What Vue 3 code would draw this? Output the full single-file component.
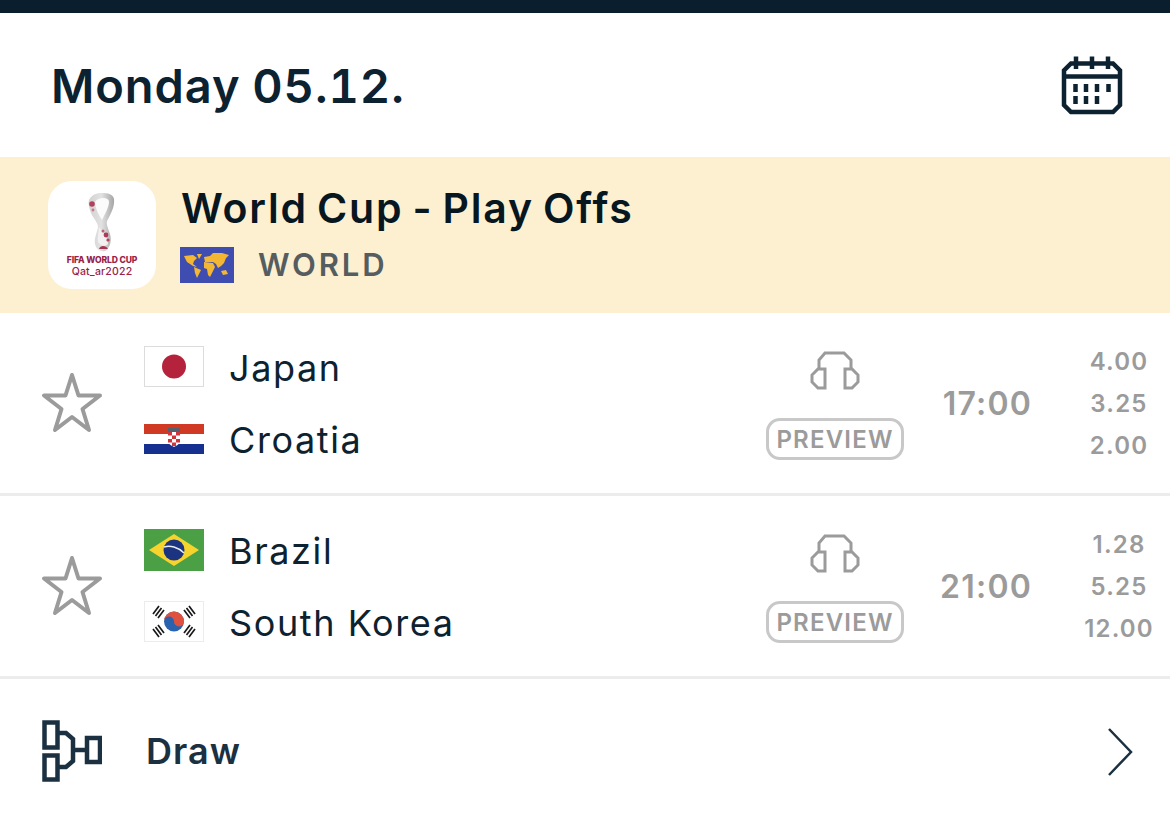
<script setup>
const matches = [
  { home: 'Japan', away: 'Croatia', homeFlag: 'jp', awayFlag: 'hr', time: '17:00', odds: ['4.00', '3.25', '2.00'] },
  { home: 'Brazil', away: 'South Korea', homeFlag: 'br', awayFlag: 'kr', time: '21:00', odds: ['1.28', '5.25', '12.00'] }
]
</script>

<template>
  <div class="screen">
    <div class="topbar"></div>
    <header class="header">
      <h1 class="day">Monday 05.12.</h1>
      <svg class="cal" width="62" height="62" viewBox="0 0 62 62" fill="none" stroke="#0d2230" stroke-width="4.500">
        <path d="M10 8.500H52L59 15.500V50L52 57H10L3 50V15.500Z" />
        <path d="M3 21.500H59" />
        <path d="M15 1.500V14M31 1.500V14M47 1.500V14" />
        <path d="M14.500 29V37M25 29V37M36 29V37M47.500 29V37M14.500 41V49M25 41V49M36 41V49" />
      </svg>
    </header>

    <section class="league">
      <div class="logo">
        <svg class="trophy" width="28" height="60" viewBox="0 0 28 60" fill="none">
          <defs>
            <linearGradient id="silver" x1="0" y1="0" x2="1" y2="0">
              <stop offset="0" stop-color="#d2d2d2" />
              <stop offset=".5" stop-color="#e2e2e2" />
              <stop offset="1" stop-color="#a5a5a5" />
            </linearGradient>
          </defs>
          <path d="M1 7C4 1 9 0 14 0C20 0 25 1 26 6C27 14 22 22 19 28C18 31 20 35 22 41C24 48 22 55 17 58C12 59 8 56 7 51C6 45 9 40 10 34C10 30 6 26 3 20C1 15 0 10 1 7Z" fill="url(#silver)" />
          <path d="M7 9C9 6 12 5 15 5C18 5 21 6 21 9C21 14 17 21 14 27C11 22 7 15 7 9Z" fill="#fbfbfb" />
          <path d="M11 34C14 38 20 44 20 51C17 54 13 53 10 49C9 44 11 39 11 34Z" fill="#f1f1f1" />
          <circle cx="4" cy="11" r="2.800" fill="#b5405c" />
          <circle cx="5" cy="17" r="1.400" fill="#c77a8c" />
          <circle cx="15" cy="38" r="1.500" fill="#c06077" />
          <circle cx="18" cy="42" r="2.400" fill="#ad3a56" />
          <circle cx="20" cy="47" r="1.600" fill="#b5405c" />
          <path d="M11 56C12 52 18 52 20 56Z" fill="#a83450" />
        </svg>
        <div class="fifa">FIFA WORLD CUP</div>
        <div class="qatar">Qat_ar2022</div>
      </div>
      <div class="league-info">
        <div class="league-name">World Cup - Play Offs</div>
        <div class="league-sub">
          <svg class="world" width="54" height="36" viewBox="0 0 54 36">
            <rect width="54" height="36" fill="#3f4db0" />
            <path d="M4 9L13 8L17 11L14 14L13 17L17 20L13 19L7 15Z" fill="#f4b733" />
            <path d="M17 7L22 7L19 12Z" fill="#f4b733" />
            <path d="M14 20L21 23L17 31L15 26Z" fill="#f4b733" />
            <path d="M24 10L30 9L33 6L42 6L49 8L46 11L44 16L41 19L38 21L36 17L33 15L25 15Z" fill="#f4b733" />
            <path d="M24 15L33 16L35 20L30 30L28 28L27 22L24 21Z" fill="#f4b733" />
            <path d="M41 24L46 23L48 27L43 28Z" fill="#f4b733" />
          </svg>
          <span class="region">WORLD</span>
        </div>
      </div>
    </section>

    <article v-for="m in matches" :key="m.home" class="match">
      <svg class="star" width="62" height="62" viewBox="0 0 62 62" fill="none" stroke="#9b9b9b" stroke-width="4" stroke-linejoin="round">
        <path d="M31 3L37.500 23.500H59L41.500 37L48 58L31 45L14 58L20.500 37L3 23.500H24.500Z" />
      </svg>
      <div class="teams">
        <div v-for="t in [{ n: m.home, f: m.homeFlag }, { n: m.away, f: m.awayFlag }]" :key="t.n" class="team">
          <svg class="flag" width="60" height="42" viewBox="0 0 60 42">
            <template v-if="t.f === 'jp'">
              <rect x=".5" y=".5" width="59" height="40" fill="#fff" stroke="#dcdcdc" />
              <circle cx="30" cy="20.500" r="12" fill="#b5223c" />
            </template>
            <template v-else-if="t.f === 'hr'">
              <rect y="6" width="60" height="10" fill="#d03a25" />
              <rect y="16" width="60" height="10" fill="#fff" />
              <rect y="26" width="60" height="10" fill="#15308f" />
              <rect x="24" y="10" width="12" height="4" fill="#56606a" />
              <path d="M24 14H36V23C36 26 32 28 30 29C28 28 24 26 24 23Z" fill="#fff" />
              <path d="M24 14H28V17.500H24ZM32 14H36V17.500H32ZM28 17.500H32V21H28ZM24 21H28V24.500H24ZM32 21H36V24.500H32ZM28 24.500H32V28H28Z" fill="#d0353c" />
            </template>
            <template v-else-if="t.f === 'br'">
              <rect width="60" height="42" fill="#4ba046" />
              <path d="M30 5L55 21L30 37L5 21Z" fill="#f6d32d" />
              <circle cx="30" cy="21" r="10.500" fill="#1c3480" />
              <path d="M20 18C26 16 34 18 40 24" fill="none" stroke="#e8edf4" stroke-width="1.500" />
            </template>
            <template v-else>
              <rect x=".5" y=".5" width="59" height="40" fill="#fff" stroke="#ececec" />
              <circle cx="30" cy="20.500" r="10" fill="#2a62ad" />
              <path d="M20 20.500A10 10 0 0 1 40 20.500A5 5 0 0 1 30 20.500A5 5 0 0 0 20 20.500Z" fill="#e0503e" />
              <path d="M9 13L15 5M11.500 15L17.500 7M14 17L20 9M45 5L51 13M42.500 7L48.500 15M40 9L46 17M9 28L15 36M11.500 26L17.500 34M14 24L20 32M45 36L51 28M42.500 34L48.500 26M40 32L46 24" stroke="#1a1a1a" stroke-width="1.700" />
            </template>
          </svg>
          <span class="team-name">{{ t.n }}</span>
        </div>
      </div>
      <div class="extras">
        <svg class="phones" width="50" height="40" viewBox="0 0 50 40" fill="none" stroke="#9b9b9b" stroke-width="3">
          <path d="M9 19V9L15 2H34L41 9V19" />
          <path d="M15 18V37H8L2 31V24L8 18ZM35 18V37H42L48 31V24L42 18Z" />
        </svg>
        <span class="preview">PREVIEW</span>
      </div>
      <div class="time">{{ m.time }}</div>
      <div class="odds">
        <span v-for="o in m.odds" :key="o">{{ o }}</span>
      </div>
    </article>

    <footer class="draw">
      <svg class="bracket" width="60" height="62" viewBox="0 0 60 62" fill="none" stroke="#1b3040" stroke-width="4.500">
        <rect x="2.500" y="2.500" width="13" height="25" />
        <rect x="2.500" y="35.500" width="13" height="24" />
        <rect x="45" y="18" width="13" height="24" />
        <path d="M15 13H24L31 19V41L24 47H15M31 30H45" />
      </svg>
      <span class="draw-label">Draw</span>
      <svg class="chev" width="28" height="50" viewBox="0 0 28 50" fill="none" stroke="#1b3040" stroke-width="2.500">
        <path d="M3 2L25 25L3 48" />
      </svg>
    </footer>
  </div>
</template>

<style scoped>
.screen {
  width: 1170px;
  height: 814px;
  overflow: hidden;
  background: #fff;
  font-family: Inter, "Liberation Sans", sans-serif;
  color: #0d2230;
}
.topbar {
  height: 13px;
  background: #0a1f2e;
}
.header {
  height: 144px;
  box-sizing: border-box;
  padding: 0 47px 0 51px;
  display: flex;
  align-items: center;
  justify-content: space-between;
}
.day {
  margin: 0;
  font-size: 47px;
  font-weight: 600;
  letter-spacing: 0.950px;
  word-spacing: -2px;
  font-variant-numeric: tabular-nums;
  color: #0d2230;
}
.cal {
  margin-top: 1px;
}
.league {
  height: 156px;
  background: #fcf0d0;
  box-sizing: border-box;
  padding: 24px 0 0 48px;
  display: flex;
  gap: 25px;
}
.logo {
  width: 108px;
  height: 108px;
  border-radius: 24px;
  background: #fff;
  display: flex;
  flex-direction: column;
  align-items: center;
  box-sizing: border-box;
  padding-top: 12px;
}
.trophy {
  flex: none;
}
.fifa {
  margin-top: 3px;
  font-size: 8.600px;
  line-height: 9px;
  font-weight: 800;
  color: #9a2148;
  white-space: nowrap;
  letter-spacing: -0.15px;
}
.qatar {
  margin-top: 0.5px;
  font-size: 10.500px;
  line-height: 11px;
  font-weight: 500;
  letter-spacing: 0.2px;
  color: #9a2148;
  white-space: nowrap;
}
.league-info {
  display: flex;
  flex-direction: column;
}
.league-name {
  font-size: 41px;
  line-height: 52px;
  font-weight: 600;
  letter-spacing: 1.800px;
  word-spacing: -3px;
  color: #07161f;
  white-space: nowrap;
  margin-top: 1px;
}
.league-sub {
  display: flex;
  align-items: center;
  gap: 24px;
  margin-top: 12px;
  margin-left: -1px;
}
.region {
  font-size: 31px;
  font-weight: 600;
  letter-spacing: 2.900px;
  color: #555d60;
}
.match {
  height: 183px;
  box-sizing: border-box;
  border-bottom: 3px solid #ececec;
  display: flex;
  align-items: center;
  position: relative;
}
.star {
  margin-left: 41px;
  flex: none;
}
.teams {
  margin-left: 41px;
  width: 620px;
  display: flex;
  flex-direction: column;
  gap: 30px;
  margin-top: -1px;
}
.team {
  display: flex;
  align-items: center;
  gap: 25px;
  height: 42px;
}
.flag {
  flex: none;
}
.team-name {
  margin-top: 2px;
  font-size: 36px;
  font-weight: 400;
  letter-spacing: 1.600px;
  color: #0d2230;
  white-space: nowrap;
}
.extras {
  width: 138px;
  display: flex;
  flex-direction: column;
  align-items: center;
  margin-left: 2px;
  flex: none;
  margin-top: 5px;
}
.preview {
  margin-top: 27px;
  width: 138px;
  height: 42px;
  box-sizing: border-box;
  border: 3px solid #c8c8c8;
  border-radius: 14px;
  font-size: 24px;
  font-weight: 600;
  line-height: 37px;
  text-align: center;
  letter-spacing: 1.200px;
  color: #9b9b9b;
}
.time {
  width: 128px;
  flex: none;
  text-align: right;
  font-size: 32px;
  font-weight: 600;
  letter-spacing: 1.200px;
  color: #9b9b9b;
  margin-top: 1px;
}
.odds {
  width: 102px;
  margin-left: auto;
  display: flex;
  flex-direction: column;
  align-items: center;
  font-size: 24px;
  font-weight: 600;
  line-height: 42px;
  letter-spacing: 1.200px;
  color: #9b9b9b;
  margin-top: 1px;
}
.draw {
  display: flex;
  align-items: center;
  padding: 0 36px 0 42px;
  height: 135px;
  box-sizing: border-box;
}
.bracket {
  flex: none;
  margin-top: 8px;
}
.draw-label {
  margin-left: 44px;
  margin-top: 8px;
  font-size: 36px;
  font-weight: 600;
  letter-spacing: 1px;
  color: #1b3040;
  flex: 1;
}
.chev {
  margin-top: 10px;
}
</style>
